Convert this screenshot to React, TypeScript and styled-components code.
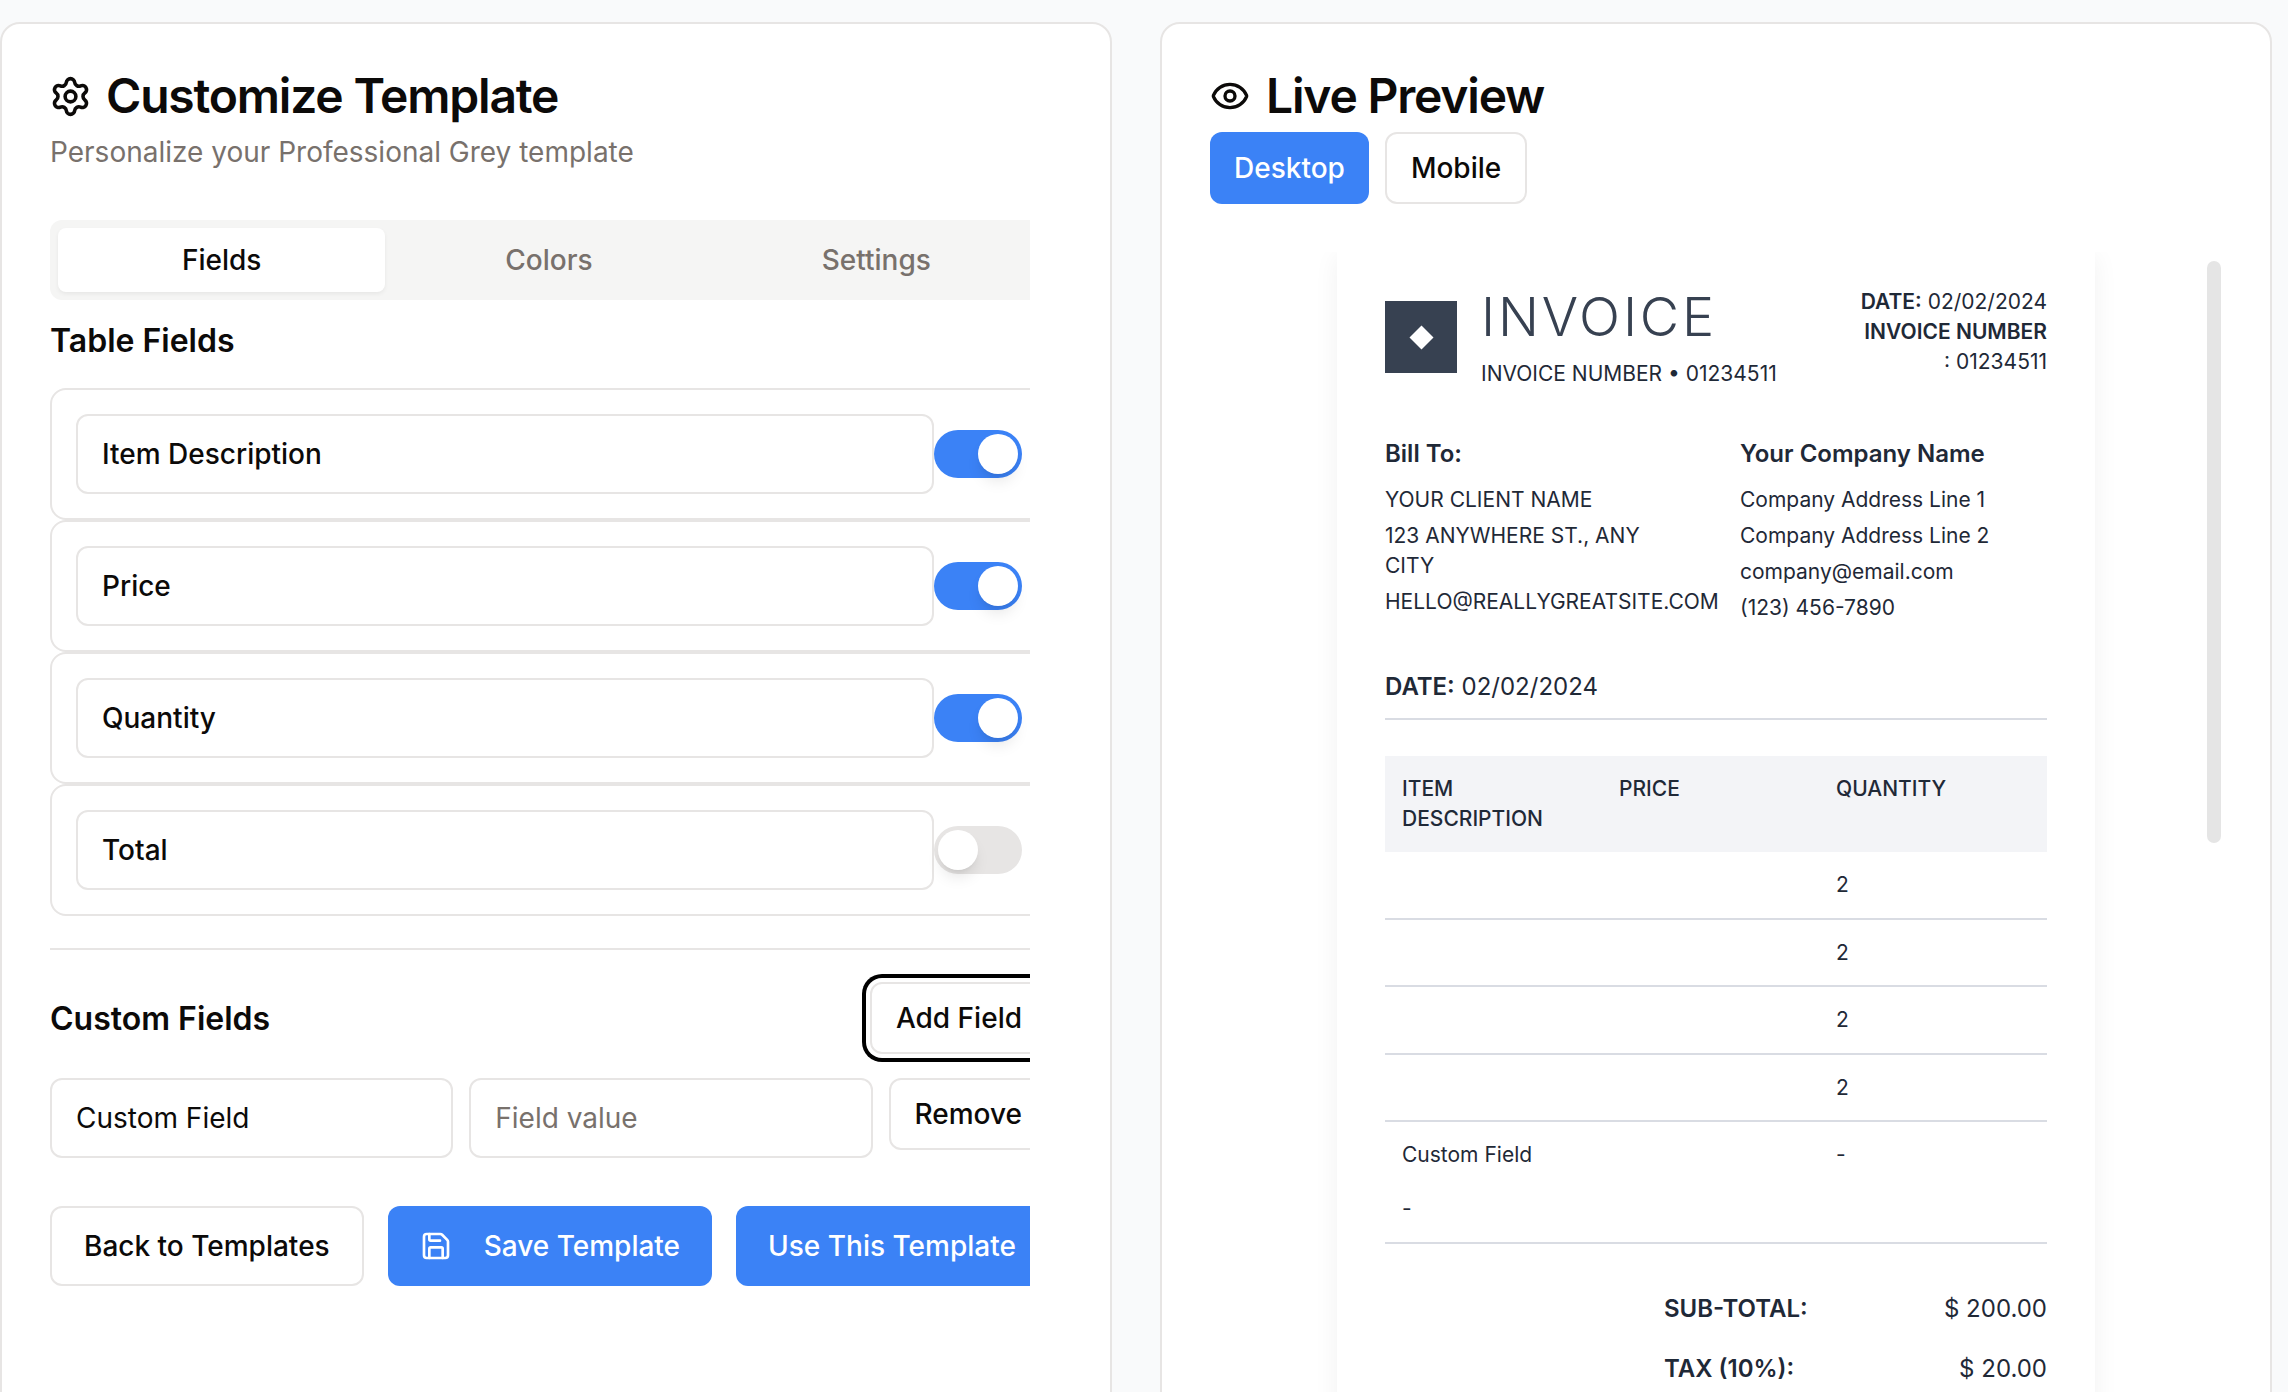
import { createGlobalStyle, styled } from "styled-components";
import { Eye, Save, Settings } from "lucide-react";

const GlobalStyle = createGlobalStyle`
  html, body {
    margin: 0;
    height: 100%;
    overflow: hidden;
    background: #f9fafb;
    font-family: Inter, "Noto Sans", sans-serif;
    color: #0c0a09;
  }
  * { box-sizing: border-box; }
`;

const Page = styled.div`
  display: grid;
  grid-template-columns: 1112px 1112px;
  gap: 48px;
  height: 1392px;
  padding-top: 22px;
  overflow: hidden;
`;

const Card = styled.section`
  height: 1500px;
  padding: 48px;
  background: #fff;
  border: 2px solid #e7e5e4;
  border-radius: 20px;
`;

const Title = styled.h1`
  display: flex;
  align-items: center;
  gap: 16px;
  margin: 0;
  font-size: 48px;
  line-height: 48px;
  font-weight: 600;
  letter-spacing: -1.2px;
`;

const GearIcon = styled(Settings)`
  flex: none;
  margin: 0 -1.5px;
`;

const Subtitle = styled.p`
  margin: 12px 0 48px;
  font-size: 28px;
  line-height: 40px;
  color: #78716c;
`;

const Clip = styled.div`
  width: 980px;
  overflow: hidden;
`;

const Inner = styled.div`
  width: 998px;
`;

const TabBar = styled.div`
  display: grid;
  grid-template-columns: repeat(3, 1fr);
  height: 80px;
  padding: 8px;
  background: #f5f5f4;
  border-radius: 12px;
`;

const Tab = styled.div<{ $active?: boolean }>`
  display: flex;
  align-items: center;
  justify-content: center;
  font-size: 28px;
  font-weight: 500;
  border-radius: 8px;
  color: ${(p) => (p.$active ? "#0c0a09" : "#78716c")};
  background: ${(p) => (p.$active ? "#fff" : "transparent")};
  box-shadow: ${(p) => (p.$active ? "0 2px 4px rgba(0,0,0,0.06)" : "none")};
`;

const SectionTitle = styled.h2<{ $top?: number }>`
  margin: ${(p) => p.$top ?? 0}px 0 0;
  padding-top: 2px;
  font-size: 32px;
  line-height: 46px;
  font-weight: 600;
`;

const FieldList = styled.div`
  margin-top: 24px;
`;

const FieldRow = styled.div`
  display: flex;
  align-items: center;
  padding: 24px;
  border: 2px solid #e7e5e4;
  border-radius: 16px;
`;

const TextInput = styled.input<{ $medium?: boolean }>`
  flex: 1;
  min-width: 0;
  height: 80px;
  padding: 0 24px;
  font: ${(p) => (p.$medium ? 500 : 400)} 28px Inter, sans-serif;
  color: #0c0a09;
  background: #fff;
  border: 2px solid #e7e5e4;
  border-radius: 12px;
  outline: none;
  &::placeholder {
    color: #78716c;
  }
`;

const Toggle = styled.span<{ $on?: boolean }>`
  display: flex;
  flex: none;
  width: 88px;
  height: 48px;
  padding: 4px;
  justify-content: ${(p) => (p.$on ? "flex-end" : "flex-start")};
  background: ${(p) => (p.$on ? "#3b82f6" : "#e7e5e4")};
  border-radius: 24px;
`;

const Thumb = styled.span`
  width: 40px;
  height: 40px;
  background: #fff;
  border-radius: 50%;
  box-shadow: 0 10px 15px -3px rgba(0, 0, 0, 0.1), 0 4px 6px -4px rgba(0, 0, 0, 0.1);
`;

const Divider = styled.hr`
  height: 2px;
  margin: 32px 0;
  background: #e7e5e4;
  border: 0;
`;

const CustomHeader = styled.div`
  display: flex;
  align-items: center;
  justify-content: space-between;
  margin-bottom: 24px;
`;

const Button = styled.button<{ $primary?: boolean; $height?: number; $pad?: number }>`
  display: inline-flex;
  align-items: center;
  justify-content: center;
  gap: 32px;
  flex: none;
  height: ${(p) => p.$height ?? 80}px;
  padding: 0 ${(p) => p.$pad ?? 32}px;
  font: 500 28px Inter, sans-serif;
  color: ${(p) => (p.$primary ? "#fff" : "#0c0a09")};
  background: ${(p) => (p.$primary ? "#3b82f6" : "#fff")};
  border: ${(p) => (p.$primary ? "0" : "2px solid #e7e5e4")};
  border-radius: 12px;
`;

const FocusedButton = styled(Button)`
  box-shadow: 0 0 0 4px #fff, 0 0 0 8px #000;
`;

const CustomRow = styled.div`
  display: flex;
  align-items: flex-start;
  gap: 16px;
`;

const Actions = styled.div`
  display: flex;
  gap: 24px;
  margin-top: 48px;
`;

const ModeSwitch = styled.div`
  display: flex;
  gap: 16px;
  margin-top: 12px;
`;

const PreviewArea = styled.div`
  position: relative;
  margin-top: 48px;
  display: flex;
  justify-content: center;
  overflow: hidden;
`;

const ScrollThumb = styled.div`
  position: absolute;
  top: 9px;
  right: 1px;
  width: 14px;
  height: 582px;
  background: #e5e5e5;
  border-radius: 7px;
`;

const Paper = styled.div`
  width: 758px;
  margin-bottom: 40px;
  padding: 35px 48px 48px;
  background: #fff;
  color: #1f2937;
  font-size: 21px;
  line-height: 30px;
  box-shadow: 0 4px 24px rgba(0, 0, 0, 0.06);
`;

const InvoiceHeader = styled.div`
  display: flex;
  justify-content: space-between;
  align-items: flex-start;
  margin-bottom: 48px;
`;

const Brand = styled.div`
  display: flex;
  align-items: flex-start;
  gap: 24px;
`;

const Logo = styled.div`
  display: flex;
  align-items: center;
  justify-content: center;
  width: 72px;
  height: 72px;
  margin-top: 14px;
  background: #374151;
`;

const Diamond = styled.span`
  width: 17px;
  height: 17px;
  background: #fff;
  transform: rotate(45deg);
`;

const InvoiceTitle = styled.div`
  font-size: 54px;
  line-height: 60px;
  font-weight: 300;
  letter-spacing: 2.8px;
  color: #374151;
  margin-bottom: 12px;
`;

const Meta = styled.div`
  width: 190px;
  text-align: right;
`;

const Strong = styled.strong`
  font-weight: 600;
`;

const Parties = styled.div`
  display: grid;
  grid-template-columns: minmax(0, 1fr) minmax(0, 1fr);
  gap: 48px;
`;

const PartyName = styled.div`
  font-size: 24px;
  line-height: 34px;
  font-weight: 600;
  margin-bottom: 14px;
`;

const PartyLine = styled.div`
  margin-bottom: 6px;
`;

const DateLine = styled.div`
  margin-top: 41px;
  padding-bottom: 14px;
  font-size: 24px;
  line-height: 34px;
  border-bottom: 2px solid #d9dce3;
`;

const ItemTable = styled.div`
  margin-top: 36px;
`;

const TableHead = styled.div`
  display: grid;
  grid-template-columns: 217px 217px 228px;
  height: 96px;
  padding-top: 18px;
  background: #f3f4f7;
  font-weight: 500;
`;

const TableRow = styled.div<{ $height?: number }>`
  display: grid;
  grid-template-columns: 217px 217px 228px;
  height: ${(p) => p.$height ?? 67.5}px;
  padding-top: 18px;
  border-bottom: 2px solid #d9dce3;
`;

const Cell = styled.div`
  padding: 0 17px;
`;

const CellExtra = styled.div`
  margin-top: 24px;
`;

const Totals = styled.div`
  width: 383px;
  margin: 48px 0 0 auto;
  font-size: 24px;
  line-height: 34px;
`;

const TotalRow = styled.div`
  display: flex;
  justify-content: space-between;
  margin-bottom: 26px;
`;

const fields = [
  { label: "Item Description", on: true },
  { label: "Price", on: true },
  { label: "Quantity", on: true },
  { label: "Total", on: false },
];

export default function App() {
  return (
    <>
      <GlobalStyle />
      <Page>
        <Card>
          <Title>
            <GearIcon size={43} strokeWidth={2} />
            Customize Template
          </Title>
          <Subtitle>Personalize your Professional Grey template</Subtitle>
          <Clip>
            <Inner>
              <TabBar>
                <Tab $active>Fields</Tab>
                <Tab>Colors</Tab>
                <Tab>Settings</Tab>
              </TabBar>
              <SectionTitle $top={16}>Table Fields</SectionTitle>
              <FieldList>
                {fields.map((f) => (
                  <FieldRow key={f.label}>
                    <TextInput $medium defaultValue={f.label} readOnly />
                    <Toggle $on={f.on}>
                      <Thumb />
                    </Toggle>
                  </FieldRow>
                ))}
              </FieldList>
              <Divider />
              <CustomHeader>
                <SectionTitle>Custom Fields</SectionTitle>
                <FocusedButton $height={72} $pad={24}>Add Field</FocusedButton>
              </CustomHeader>
              <CustomRow>
                <TextInput defaultValue="Custom Field" readOnly />
                <TextInput placeholder="Field value" readOnly />
                <Button $height={72} $pad={24}>Remove</Button>
              </CustomRow>
              <Actions>
                <Button>Back to Templates</Button>
                <Button $primary>
                  <Save size={32} />
                  Save Template
                </Button>
                <Button $primary>Use This Template</Button>
              </Actions>
            </Inner>
          </Clip>
        </Card>

        <Card>
          <Title>
            <Eye size={40} strokeWidth={2} />
            Live Preview
          </Title>
          <ModeSwitch>
            <Button $primary $height={72} $pad={24}>Desktop</Button>
            <Button $height={72} $pad={24}>Mobile</Button>
          </ModeSwitch>
          <PreviewArea>
            <ScrollThumb />
            <Paper>
              <InvoiceHeader>
                <Brand>
                  <Logo>
                    <Diamond />
                  </Logo>
                  <div>
                    <InvoiceTitle>INVOICE</InvoiceTitle>
                    <div>INVOICE NUMBER • 01234511</div>
                  </div>
                </Brand>
                <Meta>
                  <div>
                    <Strong>DATE:</Strong> 02/02/2024
                  </div>
                  <div>
                    <Strong>INVOICE NUMBER</Strong> : 01234511
                  </div>
                </Meta>
              </InvoiceHeader>

              <Parties>
                <div>
                  <PartyName>Bill To:</PartyName>
                  <PartyLine>YOUR CLIENT NAME</PartyLine>
                  <PartyLine>123 ANYWHERE ST., ANY CITY</PartyLine>
                  <PartyLine>HELLO@REALLYGREATSITE.COM</PartyLine>
                </div>
                <div>
                  <PartyName>Your Company Name</PartyName>
                  <PartyLine>Company Address Line 1</PartyLine>
                  <PartyLine>Company Address Line 2</PartyLine>
                  <PartyLine>company@email.com</PartyLine>
                  <PartyLine>(123) 456-7890</PartyLine>
                </div>
              </Parties>

              <DateLine>
                <Strong>DATE:</Strong> 02/02/2024
              </DateLine>

              <ItemTable>
                <TableHead>
                  <Cell>ITEM DESCRIPTION</Cell>
                  <Cell>PRICE</Cell>
                  <Cell>QUANTITY</Cell>
                </TableHead>
                {[0, 1, 2, 3].map((i) => (
                  <TableRow key={i}>
                    <Cell />
                    <Cell />
                    <Cell>2</Cell>
                  </TableRow>
                ))}
                <TableRow $height={122}>
                  <Cell>
                    Custom Field
                    <CellExtra>-</CellExtra>
                  </Cell>
                  <Cell />
                  <Cell>-</Cell>
                </TableRow>
              </ItemTable>

              <Totals>
                <TotalRow>
                  <Strong>SUB-TOTAL:</Strong>
                  <span>$ 200.00</span>
                </TotalRow>
                <TotalRow>
                  <Strong>TAX (10%):</Strong>
                  <span>$ 20.00</span>
                </TotalRow>
              </Totals>
            </Paper>
          </PreviewArea>
        </Card>
      </Page>
    </>
  );
}
